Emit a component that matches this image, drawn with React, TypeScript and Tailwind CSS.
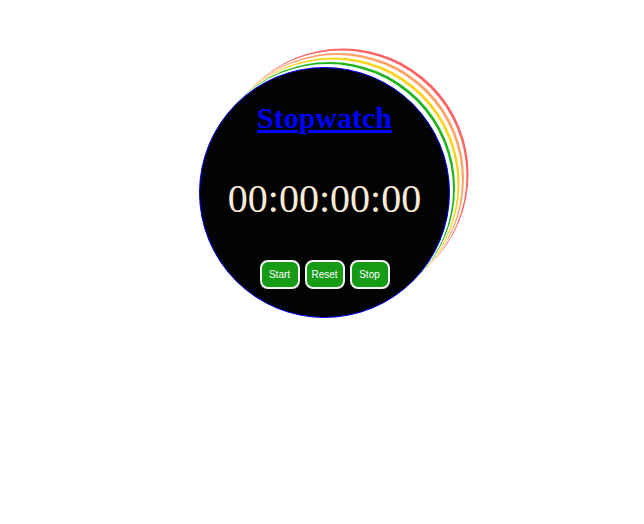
import React from 'react';

const rings =
  'shadow-[3px_-3px_0_0_#fff,5px_-5px_0_0_#1fb51f,7.5px_-7.5px_0_0_#fff,9.5px_-9.5px_0_0_#ffd21a,12px_-12px_0_0_#fff,14px_-14px_0_0_#ffa066,16.5px_-16.5px_0_0_#fff,18.5px_-18.5px_0_0_#ff6262]';

const App: React.FC = () => {
  const buttons = ['Start', 'Reset', 'Stop'];

  return (
    <div className="w-[644px] h-[524px] bg-white overflow-hidden">
      <div className="ml-[199px] pt-[67px]">
        {/* Clock face */}
        <div
          className={`w-[251px] h-[251px] rounded-full bg-[#030303] border border-[#0000ff] flex flex-col items-center pt-[35px] ${rings}`}
        >
          <h1 className="text-[30px] leading-[30px] font-bold text-[#0000ff] underline font-['Liberation_Serif',serif]">
            <a href="#">Stopwatch</a>
          </h1>
          <div className="mt-[46px] text-[40px] leading-[40px] text-[#faebd7] font-['Liberation_Serif',serif]">
            00:00:00:00
          </div>
          <div className="mt-[41px] flex gap-[5px]">
            {buttons.map((b) => (
              <button
                key={b}
                className="w-[40px] h-[29px] rounded-[8px] border-2 border-[#f4f4f4] bg-[#169b16] text-white text-[10px] font-['Liberation_Sans',Arial,sans-serif] flex items-center justify-center"
              >
                {b}
              </button>
            ))}
          </div>
        </div>
      </div>
    </div>
  );
};

export default App;
